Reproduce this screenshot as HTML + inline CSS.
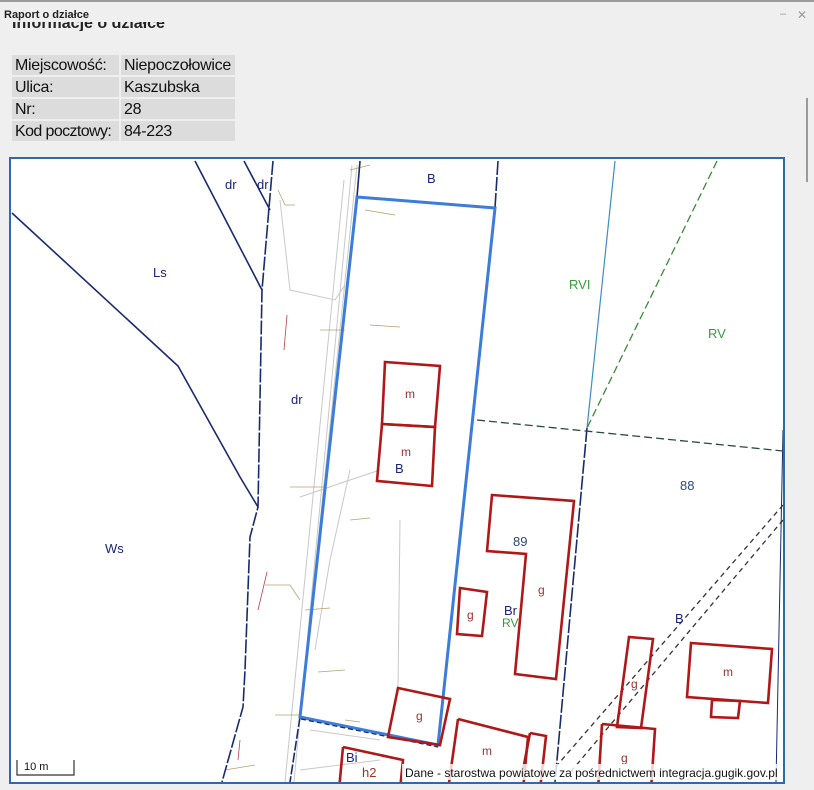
<!DOCTYPE html>
<html><head><meta charset="utf-8"><style>
html,body{margin:0;padding:0;}
body{width:814px;height:790px;background:#efefef;position:relative;overflow:hidden;font-family:"Liberation Sans",sans-serif;}
.t{position:absolute;white-space:nowrap;}
.cell{position:absolute;background:#dcdcdc;font-size:16px;line-height:21px;color:#111;padding-left:3px;box-sizing:border-box;white-space:nowrap;overflow:visible;letter-spacing:-0.3px;}
</style></head><body>
<div style="position:absolute;left:0;top:0;width:814px;height:2px;background:#9a9a9a"></div>
<div class="t" style="left:4px;top:9px;font-size:11px;font-weight:bold;color:#222">Raport o działce</div>
<div class="t" style="left:780px;top:8px;font-size:11px;color:#999">–</div>
<div class="t" style="left:797px;top:8px;font-size:12px;color:#999">✕</div>
<div style="position:absolute;left:12px;top:22px;width:200px;height:9px;overflow:hidden"><div class="t" style="left:0;top:-7px;font-size:16px;line-height:18px;font-weight:bold;color:#222">Informacje o działce</div></div>

<div class="cell" style="left:12px;top:55px;width:107px;height:20px">Miejscowość:</div>
<div class="cell" style="left:121px;top:55px;width:114px;height:20px">Niepoczołowice</div>
<div class="cell" style="left:12px;top:77px;width:107px;height:20px">Ulica:</div>
<div class="cell" style="left:121px;top:77px;width:114px;height:20px">Kaszubska</div>
<div class="cell" style="left:12px;top:99px;width:107px;height:20px">Nr:</div>
<div class="cell" style="left:121px;top:99px;width:114px;height:20px">28</div>
<div class="cell" style="left:12px;top:121px;width:107px;height:20px;letter-spacing:-0.6px">Kod pocztowy:</div>
<div class="cell" style="left:121px;top:121px;width:114px;height:20px">84-223</div>
<div style="position:absolute;left:806px;top:98px;width:2px;height:84px;background:#9a9a9a"></div>

<div style="position:absolute;left:9px;top:157px;width:772px;height:623px;border:2px solid #2f6aa8;background:#fff"></div>
<svg style="position:absolute;left:0;top:0" width="814" height="790" viewBox="0 0 814 790">
<defs><clipPath id="c"><rect x="11" y="159" width="772" height="623"/></clipPath></defs>
<g clip-path="url(#c)" fill="none">
<g stroke="#c8c8c8" stroke-width="1">
<path d="M352,165 L294,782"/><path d="M344,180 L285,782"/><path d="M357,165 L300,717"/>
<path d="M280,200 L290,290 L335,300 L345,285"/><path d="M300,497 L350,480 L380,470"/>
<path d="M300,770 L380,760"/><path d="M310,730 L380,740"/><path d="M350,470 L330,560 L315,650"/>
<path d="M400,520 L398,690"/>
</g>
<g stroke="#b5a070" stroke-width="0.8">
<path d="M278,190 L285,205 L295,205"/><path d="M320,330 L345,330"/><path d="M370,325 L400,327"/>
<path d="M350,170 L370,165"/><path d="M365,210 L395,215"/><path d="M290,487 L325,487"/>
<path d="M265,585 L290,585 L300,600"/><path d="M305,610 L330,608"/><path d="M318,672 L345,670"/>
<path d="M275,715 L300,715"/><path d="M345,720 L360,722"/><path d="M225,770 L255,765"/><path d="M350,520 L370,518"/>
</g>
<g stroke="#c04040" stroke-width="0.8"><path d="M287,315 L284,350"/><path d="M267,572 L258,610"/><path d="M240,740 L238,760"/></g>
<g stroke="#1a2a6e" stroke-width="1.6">
<path d="M12,213 L178,366 L240,477 L258,507"/>
<path d="M195,161 L262,290"/>
<path d="M244,161 L270,210"/>
<path d="M273,161 L262,290 L258,507 L250,537 L245,670 L243,707 L222,782" stroke-dasharray="14 2"/>
<path d="M360,161 L357,197"/>
<path d="M498,161 L495,208" stroke-dasharray="14 2"/>
<path d="M300,717 L290,782" stroke-dasharray="10 2"/>
<path d="M587,428 L555,782" stroke-dasharray="14 2"/>
<path d="M783,430 L776,782" stroke-width="1"/>
</g>
<path d="M615,161 L587,428" stroke="#3a8fc0" stroke-width="1.2"/>
<path d="M717,161 L587,428" stroke="#3a8a3a" stroke-width="1.3" stroke-dasharray="8 4"/>
<path d="M477,420 L783,451" stroke="#2a4a3a" stroke-width="1.3" stroke-dasharray="8 4"/>
<path d="M783,505 L553,770" stroke="#333" stroke-width="1.3" stroke-dasharray="5 4"/>
<path d="M783,520 L568,775" stroke="#333" stroke-width="1.3" stroke-dasharray="5 4"/>
<path d="M357,197 L495,208 L438,745 L300,717 Z" stroke="#3b7dd8" stroke-width="3"/>
<path d="M301,719 L438,747" stroke="#1a2a6e" stroke-width="1.2" stroke-dasharray="5 3"/>
<g stroke="#b01818" stroke-width="2.6">
<path d="M385,362 L440,366 L435,427 L382,424 Z"/>
<path d="M382,424 L435,427 L432,486 L377,481 Z"/>
<path d="M492,495 L574,501 L556,679 L515,674 L526,554 L487,551 Z"/>
<path d="M460,588 L487,592 L482,636 L457,634 Z"/>
<path d="M398,688 L450,699 L440,745 L388,737 Z"/>
<path d="M458,719 L528,737 L523,790 M448,790 L458,719"/>
<path d="M530,733 L546,736 L540,790 M523,770 L530,733"/>
<path d="M629,637 L653,639 L641,728 L617,727 Z"/>
<path d="M602,724 L655,729 L651,790 M598,790 L602,724"/>
<path d="M691,643 L772,649 L768,703 L687,697 Z"/>
<path d="M712,700 L740,701 L738,718 L711,717 Z"/>
<path d="M343,747 L403,760 L400,790 M339,790 L343,747"/>
</g>
</g>
<g font-family="Liberation Sans, sans-serif" font-size="13">
<g fill="#1a237e">
<text x="225" y="189">dr</text><text x="257" y="189">dr</text><text x="153" y="277">Ls</text>
<text x="291" y="404">dr</text><text x="105" y="553">Ws</text><text x="427" y="183">B</text>
<text x="395" y="473">B</text><text x="504" y="615">Br</text><text x="675" y="623">B</text><text x="346" y="762">Bi</text>
</g>
<g fill="#2a4a7a"><text x="680" y="490">88</text><text x="513" y="546">89</text></g>
<g fill="#3a9a3a"><text x="569" y="289">RVI</text><text x="708" y="338">RV</text><text x="502" y="627" font-size="12">RV</text></g>
<g fill="#a03030" font-size="12">
<text x="405" y="398">m</text><text x="401" y="456">m</text><text x="538" y="594">g</text><text x="467" y="619">g</text>
<text x="631" y="688">g</text><text x="723" y="676">m</text><text x="416" y="720">g</text><text x="482" y="755">m</text>
<text x="621" y="762">g</text><text x="362" y="777" font-size="13">h2</text>
</g>
</g>
<path d="M17,760 L17,775 L74,775 L74,760" stroke="#333" stroke-width="1.2" fill="none"/>
<text x="24" y="770" font-family="Liberation Sans, sans-serif" font-size="11" fill="#111">10 m</text>
<rect x="402" y="764" width="378" height="16" fill="#fff" opacity="0.8"/>
<text x="405" y="777" font-family="Liberation Sans, sans-serif" font-size="12" fill="#111">Dane - starostwa powiatowe za pośrednictwem integracja.gugik.gov.pl</text>
</svg>
</body></html>
